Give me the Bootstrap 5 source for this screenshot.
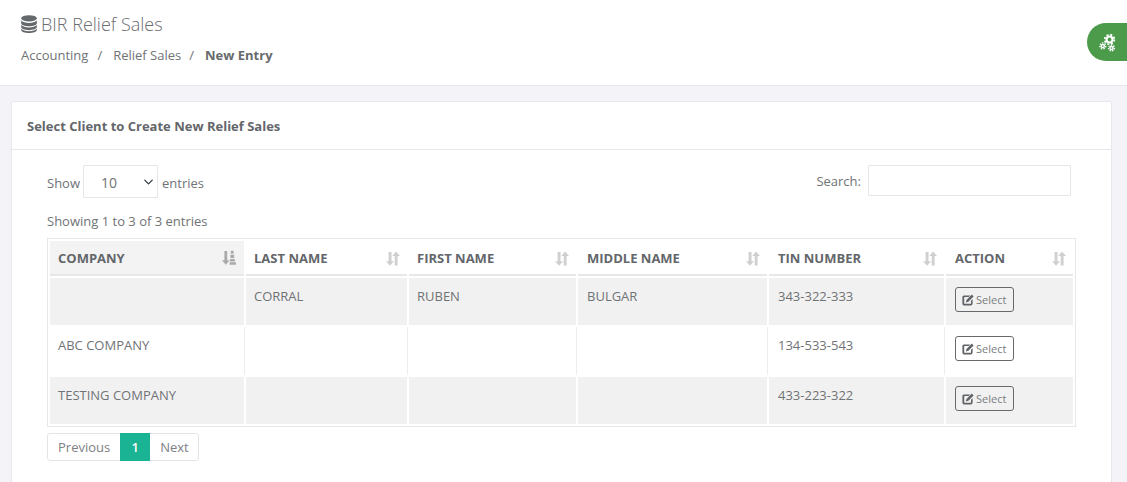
<!DOCTYPE html>
<html lang="en">
<head>
    <meta charset="UTF-8">
    <title>BIR Relief Sales</title>
    <meta name="viewport" content="width=device-width, initial-scale=1">
    <link href="https://cdn.jsdelivr.net/npm/bootstrap@5.3.2/dist/css/bootstrap.min.css" rel="stylesheet">
    <style>
        html, body { height: 482px; overflow: hidden; }
        body { background: #f3f3f8; font-family: "Open Sans", sans-serif; font-size: 13px; color: #707376; }
        .page-top { height: 86px; background: #fff; border-bottom: 1px solid #e7e7ee; padding: 13px 21px 0; }
        .page-title { font-size: 18px; font-weight: 300; line-height: 22px; margin: 0; color: #6b6d70; }
        .page-title svg { width: 16px; height: 18px; margin-right: 4px; vertical-align: -2px; }
        .crumbs { margin: 11px 0 0; font-size: 13px; line-height: 18px; }
        .crumbs .breadcrumb-item { color: #707376; }
        .crumbs .breadcrumb-item + .breadcrumb-item { padding-left: 9px; }
        .crumbs .breadcrumb-item + .breadcrumb-item::before { color: #707376; padding-right: 11px; font-weight: 400; }
        .crumbs .breadcrumb-item.active { color: #676a6c; font-weight: 700; padding-left: 8px; }
        .tool-tab { position: fixed; top: 23px; right: 0; width: 40px; height: 38px; background: #4b9b4b; border-radius: 19px 0 0 19px; display: flex; align-items: center; justify-content: center; }
        .tool-tab svg { width: 20px; height: 20px; margin-left: 1px; margin-top: 1px; }
        .main-card { margin: 15px 15px 0 11px; height: 420px; border-color: #e7e8ee; border-radius: 2px; }
        .main-card .card-header { background: #fff; height: 48px; padding: 2px 15px 0; display: flex; align-items: center; font-size: 13px; font-weight: 700; color: #63666a; border-color: #e7e8ee; }
        .main-card .card-body { padding: 15px 35px 0; }
        .len-row { height: 33px; padding-top: 3px; }
        .len-text { margin-top: 2px; }
        .len-select { width: 75px; height: 33px; padding: 2px 0 0 17px; font-size: 14px; border: 1px solid #e5e6e7; border-radius: 1px; color: #707376; margin: -3px 4px 0 3px; background-size: 13px 10px; background-position: right 2px center; font-family: inherit; }
        .search-box { width: 203px; height: 31px; border: 1px solid #e5e6e7; border-radius: 1px; margin: -5px 5px 0 7px; }
        .search-lbl { margin-top: -3px; }
        .info-line { margin: 14px 0 8px; line-height: 18px; font-size: 13px; }
        .grid-wrap { width: 1029px; border: 1px solid #e7e7e7; }
        .data-grid { width: 1027px; margin: 0; table-layout: fixed; border-collapse: separate; border-spacing: 2px; border: 0; font-size: 13px; color: #707376; --bs-table-bg: transparent; }
        .data-grid > :not(caption) > * > * { border-bottom: 0; box-shadow: none; padding: 9px 8px; }
        .data-grid thead th { height: 35px; padding: 8px 8px 6px; font-size: 13px; font-weight: 700; color: #63666a; border-bottom: 2px solid #e7e7e7; position: relative; vertical-align: middle; line-height: 19px; }
        .data-grid thead th.sorted { background: #f3f3f3; }
        .data-grid > :not(caption) > * > *:nth-child(n+4) { padding-left: 9px; }
        .data-grid tbody td { height: 47px; line-height: 18px; color: #707376; vertical-align: top; }
        .data-grid tbody tr.odd-row td { background: #f1f1f1; }
        .data-grid tbody tr.even-row td { box-shadow: 1px 0 0 #ededed; height: 48px; }
        .data-grid tbody tr.even-row td:last-child { box-shadow: none; }
        .sort-ico { position: absolute; right: 7px; top: 10px; width: 14px; height: 15px; color: #d0d0d0; }
        .sorted .sort-ico { color: #aaa; right: 8px; top: 9px; }
        .pick-btn { font-size: 11px; line-height: 14px; padding: 4px 6px; border: 1px solid #676a6c; border-radius: 3px; color: #7a7d80; background: #fff; display: inline-flex; align-items: center; gap: 2px; height: 25px; width: 59px; white-space: nowrap; }
        .odd-row .pick-btn { background: transparent; }
        .pick-btn svg { width: 12px; height: 12px; flex: none; color: #5f6266; }
        .pager { margin: 6px 0 0; }
        .pager .page-link { font-size: 13px; line-height: 18px; padding: 4px 10px; height: 28px; color: #7d8085; border-color: #e3e4e7; }
        .pager .page-item.active .page-link { background: #1ab394; border-color: #1ab394; color: #fff; font-weight: 600; width: 30px; padding: 4px 0; text-align: center; }
        .pager .page-item:first-child .page-link { border-radius: 3px 0 0 3px; }
        .pager .page-item:last-child .page-link { border-radius: 0 3px 3px 0; padding-right: 9px; }
    </style>
</head>
<body>
    <svg width="0" height="0" class="d-none">
        <symbol id="ico-sort" viewBox="0 0 14 15">
            <path fill="currentColor" d="M2.600 1h2.900v9.200H8L4 14.800.1 10.200h2.500zM8.700 5H6.200L10.100.4 14 5h-2.400v9.500H8.700z"/>
        </symbol>
        <symbol id="ico-sort-amount" viewBox="0 0 14 15">
            <path fill="currentColor" d="M2.400 1h2.800v9.200h2.400L3.800 14.800 0 10.200h2.400zM8.800.8h2.800v3H8.800zM8.400 4.800h3.800v3.200H8.400zM8 9h4.800v2.500H8zM7.600 12.300H14v2.500H7.600z"/>
        </symbol>
        <symbol id="ico-edit" viewBox="0 0 12 12">
            <path fill="currentColor" fill-rule="evenodd" d="M1.900 1.400h6.300L6.600 3H2.600a.4.4 0 0 0-.4.400v6a.4.4 0 0 0 .4.400h6a.4.4 0 0 0 .4-.4V6.800l1.600-1.600v4.400c0 1-.8 1.800-1.700 1.800H1.900C1 11.400.4 10.600.4 9.600V3.200c0-1 .6-1.800 1.500-1.800z"/>
            <path fill="currentColor" d="M9.800.6l1.800 1.800-5.300 5.300-2.500.7.700-2.500z"/>
        </symbol>
    </svg>

    <div class="page-top">
        <h2 class="page-title">
            <svg viewBox="0 0 16 18" aria-hidden="true"><g fill="#66696c"><ellipse cx="8" cy="3.300" rx="7.800" ry="3.100"/><path d="M.2 5.300C1.500 7.300 4.500 8 8 8s6.500-.7 7.800-2.700v2.900C15.800 10 12.300 11.300 8 11.300S.2 10 .2 8.200z"/><path d="M.2 9.800C1.500 11.800 4.500 12.500 8 12.500s6.500-.7 7.800-2.700v2.300c0 1.800-3.500 3.100-7.800 3.100S.2 13.900.2 12.100z"/><path d="M.2 13.600C1.500 15.400 4.500 16.200 8 16.200s6.500-.8 7.800-2.600v1.300c0 1.700-3.500 3-7.800 3s-7.800-1.300-7.800-3z"/></g></svg>BIR Relief Sales
        </h2>
        <ol class="breadcrumb crumbs">
            <li class="breadcrumb-item">Accounting</li>
            <li class="breadcrumb-item">Relief Sales</li>
            <li class="breadcrumb-item active">New Entry</li>
        </ol>
    </div>

    <div class="tool-tab">
        <svg viewBox="0 0 20 20" aria-hidden="true">
            <g fill="none" stroke="#fff">
                <circle cx="11.500" cy="6.500" r="3" stroke-width="2.200"/>
                <circle cx="11.500" cy="6.500" r="4.800" stroke-width="1.800" stroke-dasharray="2 1.800"/>
                <circle cx="4.800" cy="13" r="1.600" stroke-width="1.500"/>
                <circle cx="4.800" cy="13" r="3" stroke-width="1.300" stroke-dasharray="1.400 1.200"/>
                <circle cx="13.500" cy="15" r="1.600" stroke-width="1.500"/>
                <circle cx="13.500" cy="15" r="3" stroke-width="1.300" stroke-dasharray="1.400 1.200"/>
            </g>
        </svg>
    </div>

    <div class="card main-card">
        <div class="card-header">Select Client to Create New Relief Sales</div>
        <div class="card-body">
            <div class="d-flex justify-content-between align-items-center len-row">
                <div class="d-flex align-items-center">
                    <span class="len-text">Show</span>
                    <select class="form-select len-select"><option>10</option><option>25</option></select>
                    <span class="len-text">entries</span>
                </div>
                <div class="d-flex align-items-center">
                    <span class="search-lbl">Search:</span>
                    <input type="search" class="form-control search-box">
                </div>
            </div>
            <div class="info-line">Showing 1 to 3 of 3 entries</div>
            <div class="grid-wrap">
                <table class="table data-grid">
                    <colgroup>
                        <col style="width:194px"><col style="width:161px"><col style="width:167px"><col style="width:189px"><col style="width:175px"><col>
                    </colgroup>
                    <thead>
                        <tr>
                            <th class="sorted">COMPANY<svg class="sort-ico"><use href="#ico-sort-amount"/></svg></th>
                            <th>LAST NAME<svg class="sort-ico"><use href="#ico-sort"/></svg></th>
                            <th>FIRST NAME<svg class="sort-ico"><use href="#ico-sort"/></svg></th>
                            <th>MIDDLE NAME<svg class="sort-ico"><use href="#ico-sort"/></svg></th>
                            <th>TIN NUMBER<svg class="sort-ico"><use href="#ico-sort"/></svg></th>
                            <th>ACTION<svg class="sort-ico"><use href="#ico-sort"/></svg></th>
                        </tr>
                    </thead>
                    <tbody>
                        <tr class="odd-row">
                            <td></td><td>CORRAL</td><td>RUBEN</td><td>BULGAR</td><td>343-322-333</td>
                            <td><button type="button" class="btn pick-btn"><svg><use href="#ico-edit"/></svg>Select</button></td>
                        </tr>
                        <tr class="even-row">
                            <td>ABC COMPANY</td><td></td><td></td><td></td><td>134-533-543</td>
                            <td><button type="button" class="btn pick-btn"><svg><use href="#ico-edit"/></svg>Select</button></td>
                        </tr>
                        <tr class="odd-row">
                            <td>TESTING COMPANY</td><td></td><td></td><td></td><td>433-223-322</td>
                            <td><button type="button" class="btn pick-btn"><svg><use href="#ico-edit"/></svg>Select</button></td>
                        </tr>
                    </tbody>
                </table>
            </div>
            <ul class="pagination pager">
                <li class="page-item"><a class="page-link" href="#">Previous</a></li>
                <li class="page-item active"><a class="page-link" href="#">1</a></li>
                <li class="page-item"><a class="page-link" href="#">Next</a></li>
            </ul>
        </div>
    </div>

    <script src="https://cdn.jsdelivr.net/npm/bootstrap@5.3.2/dist/js/bootstrap.bundle.min.js"></script>
</body>
</html>
